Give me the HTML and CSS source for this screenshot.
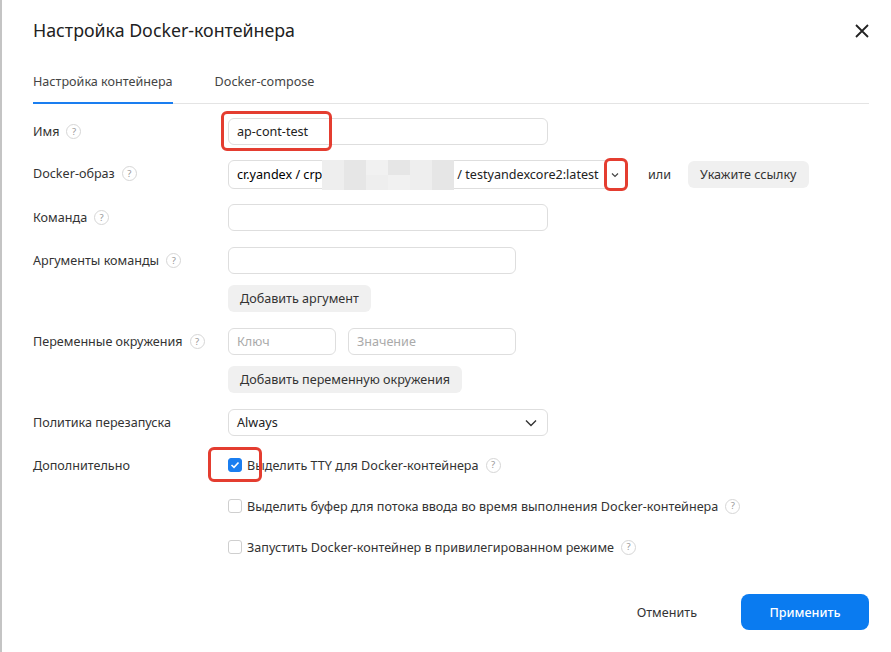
FILE: index.html
```html
<!DOCTYPE html>
<html lang="ru">
<head>
<meta charset="utf-8">
<title>Настройка Docker-контейнера</title>
<link rel="stylesheet" href="styles.css">
</head>
<body>
<div class="edge"></div>
<div class="dialog">
  <div class="header">
    <h1 class="title">Настройка Docker-контейнера</h1>
    <svg class="close" width="14" height="14" viewBox="0 0 14 14"><path d="M1 1L13 13M13 1L1 13" stroke="#222" stroke-width="1.8" fill="none"/></svg>
  </div>
  <div class="tabs">
    <div class="tab active">Настройка контейнера</div>
    <div class="tab">Docker-compose</div>
  </div>

  <div class="form">
    <div class="row r-name">
      <div class="label">Имя <span class="help">?</span></div>
      <div class="field">
        <div class="input w320 mark-wrap">ap-cont-test<span class="mark m-name"></span></div>
      </div>
    </div>

    <div class="row r-image">
      <div class="label">Docker-образ <span class="help">?</span></div>
      <div class="field inline">
        <div class="input image mark-wrap">
          <span class="strong">cr.yandex / crp</span><span class="blur"><i></i><i></i><i></i><i></i><i></i><i></i><i></i><i></i><i></i><i></i><i></i><i></i></span><span>/ testyandexcore2:latest</span>
          <svg class="chev-s" width="8" height="6" viewBox="0 0 8 6"><path d="M1 1.5L4 4.5L7 1.5" stroke="#444" stroke-width="1.2" fill="none"/></svg>
          <span class="mark m-chev"></span>
        </div>
        <span class="or">или</span>
        <div class="btn">Укажите ссылку</div>
      </div>
    </div>

    <div class="row r-cmd">
      <div class="label">Команда <span class="help">?</span></div>
      <div class="field"><div class="input w320"></div></div>
    </div>

    <div class="row r-args">
      <div class="label">Аргументы команды <span class="help">?</span></div>
      <div class="field col">
        <div class="input w288"></div>
        <div class="btn">Добавить аргумент</div>
      </div>
    </div>

    <div class="row r-env">
      <div class="label">Переменные окружения <span class="help">?</span></div>
      <div class="field col">
        <div class="pair">
          <div class="input w108 ph">Ключ</div>
          <div class="input w168 ph">Значение</div>
        </div>
        <div class="btn">Добавить переменную окружения</div>
      </div>
    </div>

    <div class="row r-policy">
      <div class="label">Политика перезапуска</div>
      <div class="field">
        <div class="input w320 select">Always
          <svg width="12" height="8" viewBox="0 0 12 8"><path d="M1 1.5L6 6.5L11 1.5" stroke="#333" stroke-width="1.4" fill="none"/></svg>
        </div>
      </div>
    </div>

    <div class="row r-extra">
      <div class="label short">Дополнительно</div>
      <div class="field checks">
        <label class="check mark-wrap"><span class="box on"><svg width="10" height="8" viewBox="0 0 10 8"><path d="M1.5 4L4 6.3L8.5 1.5" stroke="#fff" stroke-width="1.6" fill="none"/></svg></span>Выделить TTY для Docker-контейнера <span class="help">?</span><span class="mark m-check"></span></label>
        <label class="check"><span class="box"></span>Выделить буфер для потока ввода во время выполнения Docker-контейнера <span class="help">?</span></label>
        <label class="check"><span class="box"></span>Запустить Docker-контейнер в привилегированном режиме <span class="help">?</span></label>
      </div>
    </div>
  </div>

  <div class="footer">
    <div class="cancel">Отменить</div>
    <div class="apply">Применить</div>
  </div>
</div>
</body>
</html>
```

FILE: styles.css
```css
* { box-sizing: border-box; }
html, body { margin: 0; padding: 0; background: #fff; }
body {
  font-family: "Noto Sans", "Open Sans", sans-serif;
  color: #222;
  font-size: 12.6px;
  width: 891px;
  height: 652px;
  overflow: hidden;
  position: relative;
}
.edge {
  position: absolute;
  left: 0; top: 0; bottom: 0;
  width: 2px;
  background: #c4c4c4;
}
.dialog {
  padding: 18px 22px 0 33px;
}
.header {
  display: flex;
  justify-content: space-between;
  align-items: center;
  height: 24px;
}
.title {
  margin: 0;
  font-size: 17.8px;
  font-weight: 400;
  color: #222;
}
.close { margin-top: 2px; }

.tabs {
  display: flex;
  gap: 42px;
  margin-top: 27px;
  border-bottom: 1px solid #e4e4e4;
}
.tab {
  color: #444;
  padding: 4px 0 12px;
  margin-bottom: -1px;
  border-bottom: 2px solid transparent;
}
.tab.active { border-bottom-color: #1a7ef0; }

.form { margin-top: 14px; }
.row {
  display: flex;
  align-items: flex-start;
}
.label {
  width: 195px;
  flex: none;
  height: 27px;
  display: flex;
  align-items: center;
  color: #333;
}
.label.short { height: 14px; }
.help {
  display: inline-flex;
  align-items: center;
  justify-content: center;
  width: 15px; height: 15px;
  border: 1px solid #d6d6d6;
  border-radius: 50%;
  font-size: 9.5px;
  color: #999;
  margin-left: 7px;
  line-height: 1;
}
.field { display: flex; align-items: center; }
.field.col { flex-direction: column; align-items: flex-start; gap: 11px; }
.input {
  height: 27px;
  border: 1px solid #dedede;
  border-radius: 6px;
  padding: 0 8px;
  display: flex;
  align-items: center;
  color: #222;
  white-space: nowrap;
}
.w320 { width: 320px; }
.w288 { width: 288px; }
.w108 { width: 108px; }
.w168 { width: 168px; }
.ph { color: #aaa; }
.pair { display: flex; gap: 12px; }

.r-image { margin-top: 15px; }
.r-cmd { margin-top: 15px; }
.r-args { margin-top: 16px; }
.r-env { margin-top: 16px; }
.r-policy { margin-top: 16px; }
.r-extra { margin-top: 22px; }

.image { width: 400px; height: 29px; padding-right: 8px; }
.strong { color: #000; }
.blur {
  display: inline-grid;
  grid-template-columns: repeat(6, 22px);
  grid-template-rows: 15px 15px;
  margin: 0 3px 0 0;
  height: 30px;
}
.blur i:nth-child(odd) { background: #eeeeee; }
.blur i:nth-child(even) { background: #e6e6e6; }
.blur i:nth-child(3), .blur i:nth-child(10) { background: #f1f1f1; }
.chev-s { margin-left: auto; }

.or { margin: 0 17px 0 20px; color: #333; }
.btn {
  background: #f0f0f0;
  border-radius: 6px;
  height: 27px;
  padding: 0 12px;
  display: inline-flex;
  align-items: center;
  color: #333;
  white-space: nowrap;
}
.select { justify-content: space-between; padding-right: 10px; }

.field.checks { flex-direction: column; align-items: flex-start; gap: 27px; }
.check {
  display: flex;
  align-items: center;
  height: 14px;
  color: #333;
  white-space: nowrap;
}
.box {
  width: 14px; height: 14px;
  border: 1px solid #cfcfcf;
  border-radius: 3px;
  margin-right: 5px;
  display: inline-flex;
  align-items: center;
  justify-content: center;
}
.box.on { background: #1a7ef0; border-color: #1a7ef0; }

.mark-wrap { position: relative; }
.mark {
  position: absolute;
  border: 3px solid #e43d30;
  border-radius: 6px;
}
.m-name { left: -8px; top: -8px; width: 111px; height: 40px; }
.m-chev { right: -1px; top: -3px; width: 24px; height: 33px; }
.m-check { left: -20px; top: -11px; width: 54px; height: 35px; }

.footer {
  display: flex;
  justify-content: flex-end;
  align-items: center;
  margin-top: 40px;
}
.cancel { color: #333; margin-right: 44px; }
.apply {
  background: #0a7bf0;
  color: #fff;
  width: 128px;
  height: 36px;
  border-radius: 8px;
  display: flex;
  align-items: center;
  justify-content: center;
  font-weight: 500;
}
```
